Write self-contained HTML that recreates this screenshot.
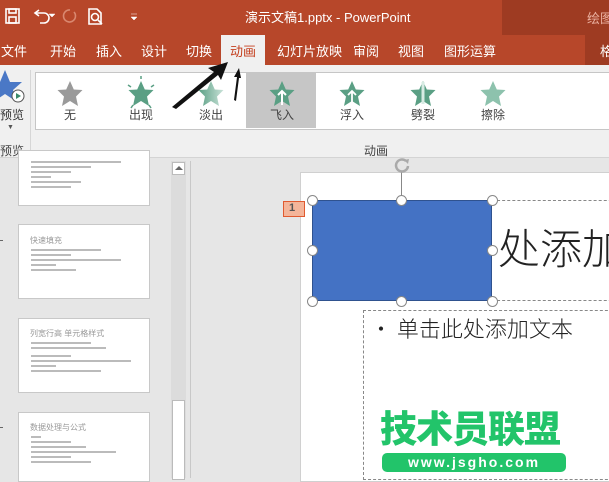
<!DOCTYPE html>
<html><head><meta charset="utf-8"><style>
*{margin:0;padding:0;box-sizing:border-box}
body{width:609px;height:478px;overflow:hidden;position:relative;background:#e6e6e6;font-family:"Liberation Sans","Noto Sans CJK SC",sans-serif}
.a{position:absolute;white-space:nowrap}
.tab{position:absolute;top:41px;color:#fff;font-size:13px;white-space:nowrap}
.it{position:absolute;top:73px;width:70px;height:56px;text-align:center;font-size:12px;color:#444}
.it span{position:absolute;top:33px;left:0;width:100%}
.h{position:absolute;width:11px;height:11px;border-radius:50%;background:#fff;border:1.5px solid #888}
.th{position:absolute;left:18px;width:132px;background:#fff;border:1px solid #c8c8c8}
.ln{height:2px;background:#bbb;margin:3px 0 0 12px}
</style></head><body>
<div class="a" style="left:0;top:0;width:609px;height:65px;background:#b7472a"></div>
<div class="a" style="left:502px;top:0;width:107px;height:35px;background:#9e3b22"></div>
<div class="a" style="left:585px;top:35px;width:24px;height:30px;background:#9e3b22"></div>
<svg class="a" style="left:0;top:0" width="140" height="35">
<g fill="none" stroke="#fff" stroke-width="1.6">
<rect x="6" y="9" width="13" height="14"/><rect x="9" y="9" width="7" height="4"/><rect x="9" y="17" width="7" height="6"/>
<path d="M36 13 H44 a5 5 0 0 1 0 10 H40"/><path d="M39 10 L35 13 L39 16"/>
<path d="M70 10 a6 6 0 1 0 4 2" stroke="#d98870"/>
<path d="M89 9 H97 L101 13 V24 H89 Z"/><circle cx="95" cy="17" r="3.5"/><path d="M98 20 L102 24"/>
</g><path d="M49 14 l3 3 l3 -3z M131 14 h6 M131 17 l3 3 l3 -3z" fill="#fff" stroke="#fff" stroke-width=".5"/>
</svg>
<div class="a" style="left:245px;top:7px;color:#fff;font-size:13px">演示文稿1.pptx - PowerPoint</div>
<div class="a" style="left:587px;top:8px;color:#eab0a0;font-size:13px">绘图</div>
<div class="tab" style="left:1px">文件</div>
<div class="tab" style="left:50px">开始</div>
<div class="tab" style="left:96px">插入</div>
<div class="tab" style="left:141px">设计</div>
<div class="tab" style="left:186px">切换</div>
<div class="tab" style="left:221px;top:35px;width:44px;height:31px;background:#f0f0f0;color:#c43e1c;padding-top:6px;text-align:center">动画</div>
<div class="tab" style="left:277px">幻灯片放映</div>
<div class="tab" style="left:353px">审阅</div>
<div class="tab" style="left:398px">视图</div>
<div class="tab" style="left:444px">图形运算</div>
<div class="tab" style="left:600px">格</div>
<div class="a" style="left:0;top:65px;width:609px;height:93px;background:#f0f0f0;border-bottom:1px solid #d4d4d4"></div>
<svg class="a" style="left:0;top:70px" width="30" height="40"><path d="M5 0 L10 12 L22 12 L13 20 L17 32 L5 24 L-7 32 L-3 20 L-12 12 L0 12Z" fill="#4a78c6"/><circle cx="18" cy="26" r="6" fill="#fff" stroke="#555"/><path d="M16 23 L21 26 L16 29Z" fill="#3a8a6a"/></svg>
<div class="a" style="left:0;top:106px;font-size:12px;color:#333">预览</div>
<div class="a" style="left:7px;top:124px;font-size:7px;color:#555">▼</div>
<div class="a" style="left:0;top:142px;font-size:12px;color:#444">预览</div>
<div class="a" style="left:30px;top:70px;width:1px;height:82px;background:#d6d6d6"></div>
<div class="a" style="left:35px;top:72px;width:580px;height:58px;background:#fff;border:1px solid #c6c6c6"></div>
<div class="a" style="left:246px;top:73px;width:70px;height:55px;background:#c6c6c6"></div>
<svg class="a" style="left:0;top:72px" width="609" height="40">
<defs><linearGradient id="g" x1="0" x2="1"><stop offset="0" stop-color="#5a9f84"/><stop offset="1" stop-color="#c9e2d8"/></linearGradient></defs>
<g transform="translate(70,22)"><path d="M0 -13 L3.8 -4.5 L12.5 -4 L6 2.5 L8 12 L0 7 L-8 12 L-6 2.5 L-12.5 -4 L-3.8 -4.5Z" fill="#9a9a9a"/></g>
<g transform="translate(141,22)"><path d="M0 -13 L3.8 -4.5 L12.5 -4 L6 2.5 L8 12 L0 7 L-8 12 L-6 2.5 L-12.5 -4 L-3.8 -4.5Z" fill="#5a9f84"/><path d="M0 -18v3M-13 -9l3 2M13 -9l-3 2M-10 14l2 -3M10 14l-2 -3" stroke="#5a9f84" stroke-width="1.5"/></g>
<g transform="translate(211,22)"><path d="M0 -13 L3.8 -4.5 L12.5 -4 L6 2.5 L8 12 L0 7 L-8 12 L-6 2.5 L-12.5 -4 L-3.8 -4.5Z" fill="url(#g)"/></g>
<g transform="translate(282,22)"><path d="M0 -13 L3.8 -4.5 L12.5 -4 L6 2.5 L8 12 L0 7 L-8 12 L-6 2.5 L-12.5 -4 L-3.8 -4.5Z" fill="#5a9f84"/><path d="M0 -3v14M-4 1l4-4l4 4" stroke="#fff" stroke-width="2" fill="none"/></g>
<g transform="translate(352,22)"><path d="M0 -13 L3.8 -4.5 L12.5 -4 L6 2.5 L8 12 L0 7 L-8 12 L-6 2.5 L-12.5 -4 L-3.8 -4.5Z" fill="#5a9f84"/><path d="M0 -3v12M-4 1l4-4l4 4" stroke="#fff" stroke-width="1.8" fill="none"/></g>
<g transform="translate(423,22)"><path d="M0 -13 L3.8 -4.5 L12.5 -4 L6 2.5 L8 12 L0 7 L-8 12 L-6 2.5 L-12.5 -4 L-3.8 -4.5Z" fill="#5a9f84"/><rect x="-1.5" y="-12" width="3" height="22" fill="#d7ebe3"/></g>
<g transform="translate(493,22)"><path d="M0 -13 L3.8 -4.5 L12.5 -4 L6 2.5 L8 12 L0 7 L-8 12 L-6 2.5 L-12.5 -4 L-3.8 -4.5Z" fill="#8dc2ad"/></g>
</svg>
<div class="it" style="left:35px"><span>无</span></div>
<div class="it" style="left:106px"><span>出现</span></div>
<div class="it" style="left:176px"><span>淡出</span></div>
<div class="it" style="left:247px"><span>飞入</span></div>
<div class="it" style="left:317px"><span>浮入</span></div>
<div class="it" style="left:388px"><span>劈裂</span></div>
<div class="it" style="left:458px"><span>擦除</span></div>
<div class="a" style="left:364px;top:142px;font-size:12px;color:#444">动画</div>
<svg class="a" style="left:0;top:0" width="609" height="160"><path d="M172 107 L214 72 L208 68 L228 62 L221 80 L218 75 L176 109Z" fill="#111"/><path d="M234 100 L237 77 L234 77 L239 68 L241 78 L239 78 L236 101Z" fill="#111"/></svg>
<div class="a" style="left:0;top:158px;width:172px;height:320px;background:#e6e6e6"></div>
<div class="th" style="top:150px;height:56px"><div class="ln" style="width:90px;margin-top:10px"></div><div class="ln" style="width:60px"></div><div class="ln" style="width:40px"></div><div class="ln" style="width:20px"></div><div class="ln" style="width:50px"></div><div class="ln" style="width:40px"></div></div>
<div class="th" style="top:224px;height:75px"><div style="font-size:8px;color:#999;margin:10px 0 0 11px">快速填充</div><div class="ln" style="width:70px"></div><div class="ln" style="width:40px"></div><div class="ln" style="width:90px"></div><div class="ln" style="width:25px"></div><div class="ln" style="width:45px"></div></div>
<div class="th" style="top:318px;height:75px"><div style="font-size:8px;color:#999;margin:9px 0 0 11px">列宽行高 单元格样式</div><div class="ln" style="width:60px"></div><div class="ln" style="width:75px"></div><div class="ln" style="width:40px;margin-top:6px"></div><div class="ln" style="width:100px"></div><div class="ln" style="width:25px"></div><div class="ln" style="width:70px"></div></div>
<div class="th" style="top:412px;height:70px"><div style="font-size:8px;color:#999;margin:9px 0 0 11px">数据处理与公式</div><div class="ln" style="width:10px"></div><div class="ln" style="width:40px"></div><div class="ln" style="width:55px"></div><div class="ln" style="width:85px"></div><div class="ln" style="width:40px"></div><div class="ln" style="width:60px"></div></div>
<div class="a" style="left:0;top:240px;width:3px;height:1px;background:#666"></div>
<div class="a" style="left:0;top:427px;width:3px;height:1px;background:#666"></div>
<div class="a" style="left:171px;top:161px;width:15px;height:317px;background:#dcdcdc"></div>
<div class="a" style="left:172px;top:162px;width:13px;height:13px;background:#fff;border:1px solid #bbb"></div>
<div class="a" style="left:175px;top:166px;border-left:4px solid transparent;border-right:4px solid transparent;border-bottom:4px solid #666"></div>
<div class="a" style="left:172px;top:400px;width:13px;height:80px;background:#fff;border:1px solid #bbb"></div>
<div class="a" style="left:190px;top:161px;width:1px;height:317px;background:#c8c8c8"></div>
<div class="a" style="left:300px;top:172px;width:320px;height:310px;background:#fff;border:1px solid #d0d0d0"></div>
<div class="a" style="left:492px;top:200px;width:130px;height:101px;border-top:1px dashed #888;border-bottom:1px dashed #888"></div>
<div class="a" style="left:498px;top:226px;font-size:42px;color:#222;font-family:'Noto Sans CJK SC',sans-serif;font-weight:300;line-height:1">处添加</div>
<div class="a" style="left:363px;top:310px;width:260px;height:170px;border:1px dashed #888"></div>
<div class="a" style="left:370px;top:312px;font-size:22px;color:#222;font-family:'Noto Sans CJK SC',sans-serif;font-weight:300">• 单击此处添加文本</div>
<div class="a" style="left:312px;top:200px;width:180px;height:101px;background:#4472c4;border:1px solid #2f528f"></div>
<div class="a" style="left:401px;top:172px;width:1px;height:28px;background:#888"></div>
<svg class="a" style="left:393px;top:156px" width="18" height="18"><path d="M13 5 A6 6 0 1 0 15 10" fill="none" stroke="#aaa" stroke-width="2.5"/><path d="M11 4 L16 3 L15 8Z" fill="#aaa"/></svg>
<div class="h" style="left:307px;top:195px"></div><div class="h" style="left:396px;top:195px"></div><div class="h" style="left:487px;top:195px"></div>
<div class="h" style="left:307px;top:245px"></div><div class="h" style="left:487px;top:245px"></div>
<div class="h" style="left:307px;top:296px"></div><div class="h" style="left:396px;top:296px"></div><div class="h" style="left:487px;top:296px"></div>
<div class="a" style="left:283px;top:201px;width:22px;height:16px;background:#f4b59a;border:1px solid #e05a30;font-size:11px;font-weight:bold;color:#555;padding-left:5px">1</div>
<div class="a" style="left:380px;top:406px;font-size:37px;font-weight:900;color:#22c46a;letter-spacing:-1px;font-family:'Noto Sans CJK SC',sans-serif;line-height:1.1">技术员联盟</div>
<div class="a" style="left:382px;top:453px;width:184px;height:19px;background:#22c46a;border-radius:5px;color:#fff;font-size:14px;font-weight:bold;text-align:center;letter-spacing:2px;line-height:19px">www.jsgho.com</div>
</body></html>
